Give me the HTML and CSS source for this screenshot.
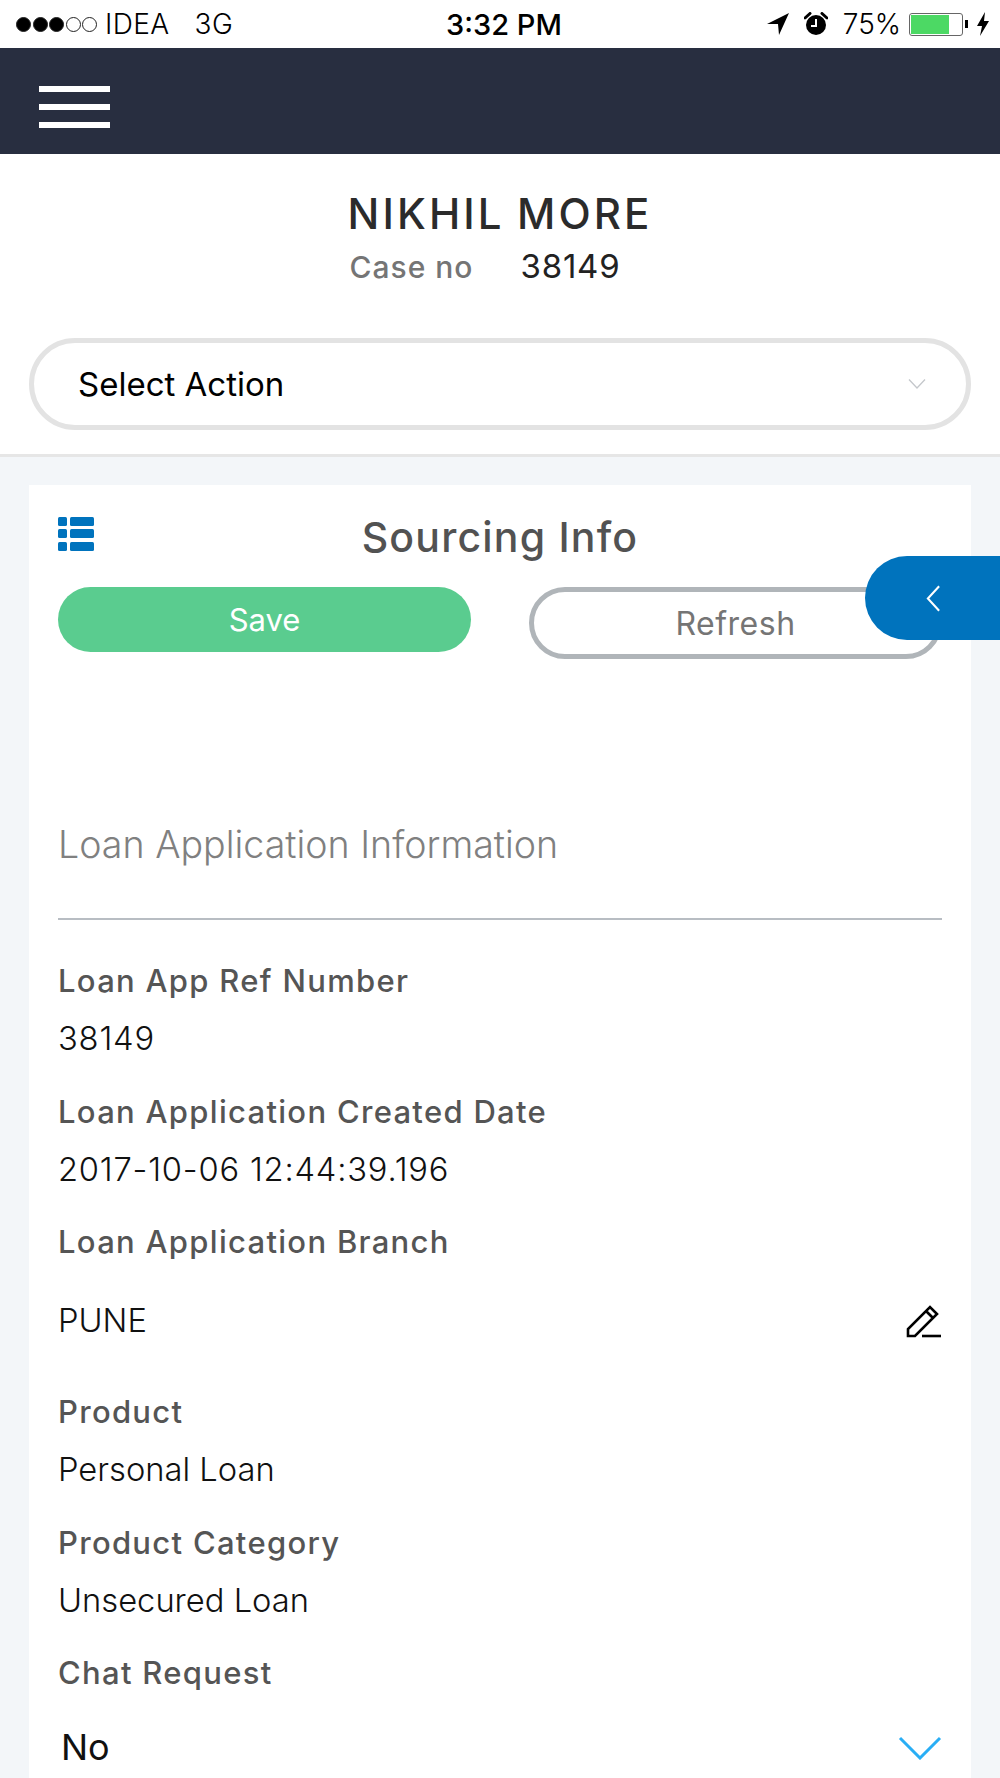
FILE: index.html
```html
<!DOCTYPE html>
<html lang="en">
<head>
    <meta charset="UTF-8">
    <meta name="viewport" content="width=device-width, initial-scale=1.0">
    <title>Sourcing Info</title>
    <link rel="stylesheet" href="styles.css">
</head>
<body>

    <div class="statusBar">
        <div class="statusLeft">
            <span class="signal">
                <i class="dot on"></i><i class="dot on"></i><i class="dot on"></i><i class="dot"></i><i class="dot"></i>
            </span>
            <span class="carrier">IDEA</span>
            <span class="network">3G</span>
        </div>
        <div class="statusTime">3:32 PM</div>
        <div class="statusRight">
            <svg class="locationIcon" viewBox="0 0 22 22"><path d="M22 0 L0 11 L11 11 L12 22 Z" fill="#000"/></svg>
            <svg class="alarmIcon" viewBox="0 0 24 24">
                <circle cx="12" cy="13" r="10" fill="#000"/>
                <path d="M1 6 L6 1.5 M18 1.5 L23 6" stroke="#000" stroke-width="3" stroke-linecap="round"/>
                <path d="M12 7 V14 H7" stroke="#fff" stroke-width="2" fill="none"/>
            </svg>
            <span class="battPercent">75%</span>
            <span class="battery"><span class="battLevel"></span></span>
            <span class="battTip"></span>
            <svg class="boltIcon" viewBox="0 0 14 24"><path d="M9 0 L1 14 H6 L4 24 L13 9 H8 Z" fill="#000"/></svg>
        </div>
    </div>

    <div class="navBar">
        <div class="hamburger"><span></span><span></span><span></span></div>
    </div>

    <div class="caseHeader">
        <h1>NIKHIL MORE</h1>
        <p><span class="caseLabel">Case no</span><span class="caseNumber">38149</span></p>
    </div>

    <div class="actionRow">
        <div class="actionSelect">
            <span>Select Action</span>
            <svg class="actionChevron" viewBox="0 0 18 12"><path d="M1 1.5 L9 10 L17 1.5" fill="none" stroke="#c4c7cb" stroke-width="1.3"/></svg>
        </div>
    </div>

    <div class="content">
        <div class="card">
            <div class="cardTitle">
                <svg class="tableIcon" viewBox="0 0 36 34">
                    <rect x="0" y="0" width="9" height="9" rx="1.5"/>
                    <rect x="12" y="0" width="24" height="9" rx="1.5"/>
                    <rect x="0" y="12" width="9" height="9" rx="1.5"/>
                    <rect x="12" y="12" width="24" height="9" rx="1.5"/>
                    <rect x="0" y="25" width="9" height="9" rx="1.5"/>
                    <rect x="12" y="25" width="24" height="9" rx="1.5"/>
                </svg>
                <h2>Sourcing Info</h2>
            </div>

            <div class="buttons">
                <button class="saveBtn">Save</button>
                <button class="refreshBtn">Refresh</button>
            </div>

            <h3 class="sectionTitle">Loan Application Information</h3>

            <div class="field">
                <label>Loan App Ref Number</label>
                <div class="value numeric">38149</div>
            </div>
            <div class="field">
                <label>Loan Application Created Date</label>
                <div class="value numeric">2017-10-06 12:44:39.196</div>
            </div>
            <div class="field editable">
                <label>Loan Application Branch</label>
                <div class="value">
                    <span>PUNE</span>
                    <svg class="editIcon" viewBox="0 0 36 34">
                        <path d="M2 32 L2 25 L24 3 L31 10 L9 32 Z M20 7 L27 14" fill="none" stroke="#000" stroke-width="2.6"/>
                        <path d="M16 32 H35" stroke="#000" stroke-width="2.6"/>
                    </svg>
                </div>
            </div>
            <div class="field">
                <label>Product</label>
                <div class="value">Personal Loan</div>
            </div>
            <div class="field">
                <label>Product Category</label>
                <div class="value">Unsecured Loan</div>
            </div>
            <div class="field dropdown">
                <label>Chat Request</label>
                <div class="value">
                    <span>No</span>
                    <svg class="chatChevron" viewBox="0 0 44 24"><path d="M2 2 L22 22 L42 2" fill="none" stroke="#29aef5" stroke-width="3"/></svg>
                </div>
            </div>
        </div>
    </div>

    <div class="sideTab">
        <svg viewBox="0 0 16 28"><path d="M14 1 L2 14 L14 27" fill="none" stroke="#fff" stroke-width="2.2"/></svg>
    </div>

</body>
</html>
```

FILE: styles.css
```css
* {
    box-sizing: border-box;
}

html, body {
    height: 1778px;
    overflow: hidden;
}

body {
    margin: 0;
    position: relative;
    font-family: 'Inter', 'Liberation Sans', sans-serif;
    background-color: #fff;
    color: #000;
}

/* status bar */
.statusBar {
    height: 48px;
    display: flex;
    align-items: center;
    justify-content: space-between;
    padding: 0 10px 0 16px;
    font-size: 28px;
    position: relative;
}

.statusLeft, .statusRight {
    display: flex;
    align-items: center;
}

.signal {
    display: flex;
    gap: 1.5px;
    margin-right: 8px;
}

.dot {
    width: 15px;
    height: 15px;
    border-radius: 50%;
    border: 1px solid #222;
}

.dot.on {
    background-color: #000;
}

.carrier {
    font-weight: 300;
    letter-spacing: 0.4px;
    margin-right: 25px;
}

.network {
    font-weight: 300;
    letter-spacing: 0.4px;
}

.statusTime {
    position: absolute;
    left: 8px;
    right: 0;
    text-align: center;
    font-weight: 500;
    font-size: 29px;
}

.locationIcon {
    width: 22px;
    height: 22px;
    margin-right: 15px;
}

.alarmIcon {
    width: 24px;
    height: 24px;
    margin-right: 15px;
}

.battPercent {
    font-weight: 300;
    margin-right: 8px;
}

.battery {
    width: 54px;
    height: 23px;
    border: 1px solid #666;
    border-radius: 3px;
    padding: 1px;
}

.battLevel {
    display: block;
    width: 75%;
    height: 100%;
    background-color: #4cd964;
}

.battTip {
    width: 3px;
    height: 8px;
    margin-left: 2px;
    background-color: #000;
}

.boltIcon {
    width: 14px;
    height: 24px;
    margin-left: 8px;
}

/* nav */
.navBar {
    height: 106px;
    background-color: #282e40;
    padding-top: 38px;
    padding-left: 39px;
}

.hamburger {
    width: 71px;
    display: flex;
    flex-direction: column;
    gap: 12px;
}

.hamburger span {
    height: 6px;
    background-color: #fff;
}

/* name and case */
.caseHeader {
    height: 184px;
    padding-top: 35px;
    text-align: center;
}

.caseHeader h1 {
    margin: 0;
    font-size: 42px;
    line-height: 50px;
    font-weight: 500;
    letter-spacing: 3.1px;
    word-spacing: -2px;
    color: #2b2b2b;
}

.caseHeader p {
    margin: 6px 0 0;
    padding-right: 30px;
    font-size: 33px;
    line-height: 42px;
}

.caseLabel {
    font-size: 30px;
    font-weight: 500;
    letter-spacing: 1px;
    color: #757575;
    margin-right: 47px;
}

.caseNumber {
    font-weight: 400;
    letter-spacing: 0.8px;
    color: #222;
}

.actionRow {
    height: 119px;
    padding: 0 29px;
    border-bottom: 3px solid #e6e6e6;
}

.actionSelect {
    height: 92px;
    border: 5px solid #e3e3e3;
    border-radius: 46px;
    display: flex;
    align-items: center;
    justify-content: space-between;
    padding: 0 40px 0 44px;
    font-size: 33px;
}

.actionChevron {
    width: 18px;
    height: 12px;
}

/* card */
.content {
    background-color: #f3f6f9;
    padding: 28px 29px 0;
    height: 1321px;
}

.card {
    background-color: #fff;
    height: 100%;
    padding: 32px 29px 0;
}

.cardTitle {
    position: relative;
    height: 70px;
}

.cardTitle h2 {
    margin: 0;
    text-align: center;
    font-size: 41px;
    line-height: 40px;
    font-weight: 500;
    letter-spacing: 1.2px;
    color: #525252;
}

.tableIcon {
    position: absolute;
    left: 0;
    top: 0;
    width: 36px;
    height: 34px;
    fill: #0073bd;
}

.buttons {
    display: flex;
    justify-content: space-between;
    align-items: flex-start;
}

.saveBtn, .refreshBtn {
    font-family: inherit;
    font-size: 31px;
    border-radius: 36px;
}

.saveBtn {
    width: 413px;
    height: 65px;
    background-color: #5acc8f;
    color: #fff;
    border: none;
}

.refreshBtn {
    width: 413px;
    height: 72px;
    font-size: 32px;
    letter-spacing: 0.5px;
    background-color: #fff;
    color: #757575;
    border: 5px solid #b0b5b9;
}

.sectionTitle {
    margin: 0 0 39px;
    padding-top: 164px;
    height: 261px;
    border-bottom: 2px solid #b8bdc3;
    font-size: 37.6px;
    line-height: 44px;
    font-weight: 300;
    color: #808080;
}

.field {
    margin-bottom: 26.5px;
}

.field:last-child {
    margin-bottom: 0;
}

.field label {
    display: block;
    font-size: 31px;
    line-height: 44px;
    font-weight: 500;
    letter-spacing: 1.3px;
    color: #555;
    margin-bottom: 11px;
}

.value {
    font-size: 32.7px;
    line-height: 49px;
    font-weight: 300;
    color: #111;
    display: flex;
    justify-content: space-between;
    align-items: center;
}

.value.numeric {
    letter-spacing: 0.8px;
}

.editable .value {
    margin-top: 32px;
    margin-bottom: 45px;
}

.editIcon {
    width: 36px;
    height: 34px;
}

.dropdown .value {
    margin-top: 28px;
    font-size: 36px;
    font-weight: 400;
    padding-left: 3px;
}

.chatChevron {
    width: 44px;
    height: 24px;
}

/* side tab sits over the card */
.sideTab {
    position: absolute;
    top: 556px;
    right: 0;
    width: 135px;
    height: 84px;
    background-color: #0073bd;
    border-radius: 42px 0 0 42px;
    padding: 29px 0 0 61px;
}

.sideTab svg {
    display: block;
    width: 15px;
    height: 27px;
}
```
